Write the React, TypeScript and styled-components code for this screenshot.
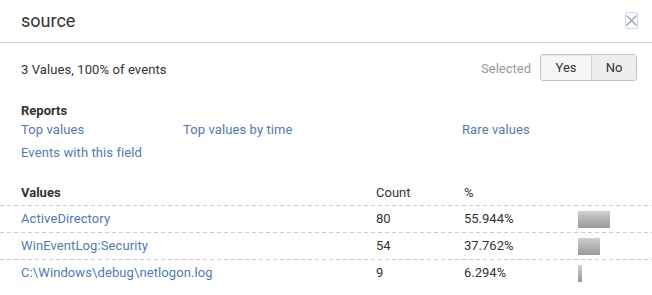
import React from 'react'
import styled, { createGlobalStyle } from 'styled-components'

const GlobalStyle = createGlobalStyle`
    body {
        margin: 0;
        background: #fff;
        font-family: Roboto, 'Liberation Sans', Arial, sans-serif;
        color: #333;
    }
`

const rows = [
    { value: 'ActiveDirectory', count: 80, pct: 55.944 },
    { value: 'WinEventLog:Security', count: 54, pct: 37.762 },
    { value: 'C:\\Windows\\debug\\netlogon.log', count: 9, pct: 6.294 },
]

const BAR_MAX = 57

const App = () => {
    return (
        <Panel>
            <GlobalStyle />

            <Header>
                <Title>source</Title>
                <CloseButton aria-label='Close'>
                    <svg width='11' height='11' viewBox='0 0 11 11'>
                        <path d='M0.5 0.5 L10.5 10.5 M10.5 0.5 L0.5 10.5' stroke='#999' strokeWidth='1.1' fill='none' />
                    </svg>
                </CloseButton>
            </Header>

            <Summary>
                <SummaryText>3 Values, 100% of events</SummaryText>
                <Selected>
                    <SelectedLabel>Selected</SelectedLabel>
                    <Toggle>
                        <ToggleButton $active>Yes</ToggleButton>
                        <ToggleButton>No</ToggleButton>
                    </Toggle>
                </Selected>
            </Summary>

            <Reports>
                <SectionTitle>Reports</SectionTitle>
                <ReportLinks>
                    <LinkText>Top values</LinkText>
                    <LinkText>Top values by time</LinkText>
                    <LinkText>Rare values</LinkText>
                    <LinkText>Events with this field</LinkText>
                </ReportLinks>
            </Reports>

            <Table>
                <HeadRow>
                    <HeadCell>Values</HeadCell>
                    <HeadCell $light>Count</HeadCell>
                    <HeadCell $light>%</HeadCell>
                    <span />
                </HeadRow>
                {rows.map(r => (
                    <Row key={r.value}>
                        <LinkText>{r.value}</LinkText>
                        <Cell>{r.count}</Cell>
                        <Cell>{r.pct.toFixed(3)}%</Cell>
                        <BarCell>
                            <Bar style={{ width: Math.max(2, Math.round((BAR_MAX * r.pct) / 100)) }} />
                        </BarCell>
                    </Row>
                ))}
            </Table>
        </Panel>
    )
}

export default App

const Panel = styled.div`
    width: 652px;
    height: 295px;
    background: #fff;
    overflow: hidden;
`
const Header = styled.div`
    height: 43px;
    box-sizing: border-box;
    border-bottom: 1px solid #ccc;
    display: flex;
    align-items: center;
    justify-content: space-between;
    padding: 0 14px 0 21px;
`
const Title = styled.h1`
    margin: 0;
    font-size: 18px;
    font-weight: normal;
    color: #333;
    position: relative;
    top: -1px;
`
const CloseButton = styled.button`
    width: 13px;
    height: 17px;
    padding: 0;
    border: 1px solid #c4d9f4;
    border-radius: 2px;
    background: #fff;
    display: flex;
    align-items: center;
    justify-content: center;
    position: relative;
    top: -1px;
`
const Summary = styled.div`
    display: flex;
    align-items: center;
    justify-content: space-between;
    padding: 11px 15px 0 21px;
`
const SummaryText = styled.div`
    font-size: 13px;
    padding-top: 4px;
    letter-spacing: 0.1px;
`
const Selected = styled.div`
    display: flex;
    align-items: center;
    gap: 9px;
`
const SelectedLabel = styled.span`
    font-size: 13px;
    color: #999;
    padding-top: 2px;
`
const Toggle = styled.div`
    display: flex;
    border: 1px solid #c3c3c3;
    border-radius: 3px;
    overflow: hidden;
`
const ToggleButton = styled.div<{ $active?: boolean }>`
    height: 25px;
    line-height: 25px;
    font-size: 13px;
    color: #333;
    text-align: center;
    width: ${p => (p.$active ? '50px' : '44px')};
    background: ${p => (p.$active ? '#f7f7f7' : '#eeeeee')};
    border-left: ${p => (p.$active ? 'none' : '1px solid #d0d0d0')};
    box-shadow: ${p => (p.$active ? 'inset 0 1px 2px rgba(0,0,0,0.06)' : 'none')};
`
const Reports = styled.div`
    padding: 21px 21px 0 21px;
`
const SectionTitle = styled.div`
    font-size: 13px;
    font-weight: bold;
    color: #333;
    line-height: 18px;
`
const ReportLinks = styled.div`
    display: grid;
    grid-template-columns: 162px 279px 1fr;
    row-gap: 5px;
    line-height: 18px;
    margin-top: 1px;
`
const LinkText = styled.a`
    font-size: 13px;
    color: #5379af;
    cursor: pointer;
    letter-spacing: 0.1px;
`
const Table = styled.div`
    margin-top: 17px;
`
const dashed = `
    background-image: linear-gradient(to right, #ccc 4px, transparent 4px);
    background-size: 7px 1px;
    background-repeat: repeat-x;
    background-position: 0 0;
`
const HeadRow = styled.div`
    display: grid;
    grid-template-columns: 355px 88px 114px 1fr;
    padding-left: 21px;
    height: 26px;
    align-items: center;
`
const HeadCell = styled.div<{ $light?: boolean }>`
    font-size: 13px;
    font-weight: ${p => (p.$light ? 'normal' : 'bold')};
    color: #333;
`
const Row = styled.div`
    display: grid;
    grid-template-columns: 355px 88px 114px 1fr;
    padding-left: 21px;
    height: 27px;
    align-items: center;
    ${dashed}
`
const Cell = styled.div`
    font-size: 13px;
    color: #333;
`
const BarCell = styled.div`
    display: flex;
    align-items: center;
    padding-top: 1px;
`
const Bar = styled.div`
    height: 17px;
    background: linear-gradient(to bottom, #cfcfcf, #999);
`
